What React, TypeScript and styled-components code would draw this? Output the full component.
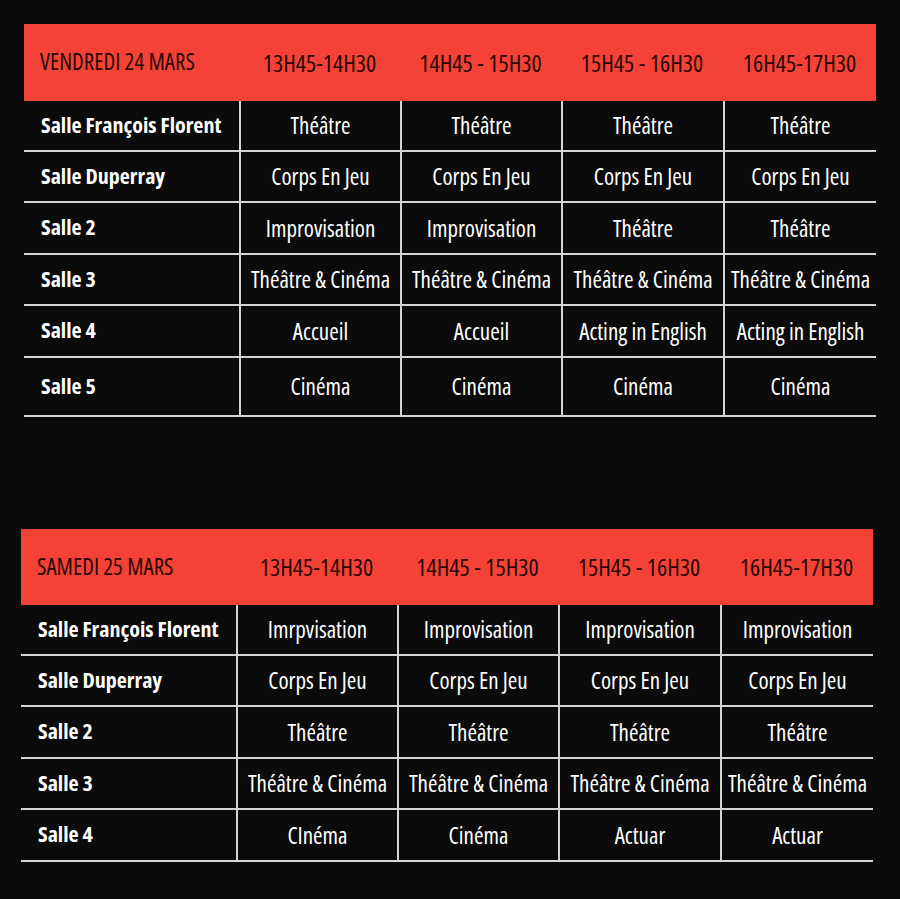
import React from "react";
import styled, { createGlobalStyle } from "styled-components";

const GlobalStyle = createGlobalStyle`
    body {
        margin: 0;
        background: #0b0b0b;
        font-family: "Open Sans", "Liberation Sans", sans-serif;
        font-stretch: 75%;
    }
`;

const Page = styled.main`
    width: 900px;
    height: 899px;
    box-sizing: border-box;
    padding-top: 24px;
    display: flex;
    flex-direction: column;
    gap: 112px;
`;

const Table = styled.section<{ $left: number; $rows: number[] }>`
    margin-left: ${(p) => p.$left}px;
    width: 852px;
    display: grid;
    grid-template-columns: 215px 161px 161px 162px 153px;
    grid-template-rows: ${(p) => p.$rows.map((r) => `${r}px`).join(" ")};
`;

const Header = styled.div<{ $first?: boolean }>`
    background: #f44336;
    color: #2a0504;
    font-size: ${(p) => (p.$first ? "23px" : "24px")};
    font-weight: 400;
    display: flex;
    align-items: center;
    justify-content: ${(p) => (p.$first ? "flex-start" : "center")};
    padding-left: ${(p) => (p.$first ? "16px" : "0")};
    padding-bottom: ${(p) => (p.$first ? "3px" : "1px")};
`;

const Cell = styled.div<{ $label?: boolean }>`
    box-sizing: border-box;
    color: #fff;
    border-bottom: 2px solid #d4d4d4;
    border-left: ${(p) => (p.$label ? "none" : "2px solid #d4d4d4")};
    font-size: ${(p) => (p.$label ? "22px" : "23px")};
    font-weight: ${(p) => (p.$label ? 700 : 400)};
    display: flex;
    align-items: center;
    justify-content: ${(p) => (p.$label ? "flex-start" : "center")};
    padding-left: ${(p) => (p.$label ? "17px" : "0")};
    padding-bottom: ${(p) => (p.$label ? "4px" : "1px")};
    white-space: nowrap;
`;

interface IRow {
    salle: string;
    cours: string[];
}

const horaires = ["13H45-14H30", "14H45 - 15H30", "15H45 - 16H30", "16H45-17H30"];

const vendredi: IRow[] = [
    { salle: "Salle François Florent", cours: ["Théâtre", "Théâtre", "Théâtre", "Théâtre"] },
    { salle: "Salle Duperray", cours: ["Corps En Jeu", "Corps En Jeu", "Corps En Jeu", "Corps En Jeu"] },
    { salle: "Salle 2", cours: ["Improvisation", "Improvisation", "Théâtre", "Théâtre"] },
    {
        salle: "Salle 3",
        cours: ["Théâtre & Cinéma", "Théâtre & Cinéma", "Théâtre & Cinéma", "Théâtre & Cinéma"],
    },
    { salle: "Salle 4", cours: ["Accueil", "Accueil", "Acting in English", "Acting in English"] },
    { salle: "Salle 5", cours: ["Cinéma", "Cinéma", "Cinéma", "Cinéma"] },
];

const samedi: IRow[] = [
    { salle: "Salle François Florent", cours: ["Imrpvisation", "Improvisation", "Improvisation", "Improvisation"] },
    { salle: "Salle Duperray", cours: ["Corps En Jeu", "Corps En Jeu", "Corps En Jeu", "Corps En Jeu"] },
    { salle: "Salle 2", cours: ["Théâtre", "Théâtre", "Théâtre", "Théâtre"] },
    {
        salle: "Salle 3",
        cours: ["Théâtre & Cinéma", "Théâtre & Cinéma", "Théâtre & Cinéma", "Théâtre & Cinéma"],
    },
    { salle: "Salle 4", cours: ["CInéma", "Cinéma", "Actuar", "Actuar"] },
];

function Planning({ jour, lignes, left, rows }: { jour: string; lignes: IRow[]; left: number; rows: number[] }) {
    return (
        <Table $left={left} $rows={rows}>
            <Header $first>{jour}</Header>
            {horaires.map((h) => (
                <Header key={h}>{h}</Header>
            ))}
            {lignes.map((ligne) => (
                <React.Fragment key={ligne.salle}>
                    <Cell $label>{ligne.salle}</Cell>
                    {ligne.cours.map((c, i) => (
                        <Cell key={i}>{c}</Cell>
                    ))}
                </React.Fragment>
            ))}
        </Table>
    );
}

export default function App() {
    return (
        <>
            <GlobalStyle />
            <Page>
                <Planning
                    jour="VENDREDI 24 MARS"
                    lignes={vendredi}
                    left={24}
                    rows={[77, 51, 51, 52, 51, 52, 59]}
                />
                <Planning jour="SAMEDI 25 MARS" lignes={samedi} left={21} rows={[76, 51, 51, 52, 51, 52]} />
            </Page>
        </>
    );
}
